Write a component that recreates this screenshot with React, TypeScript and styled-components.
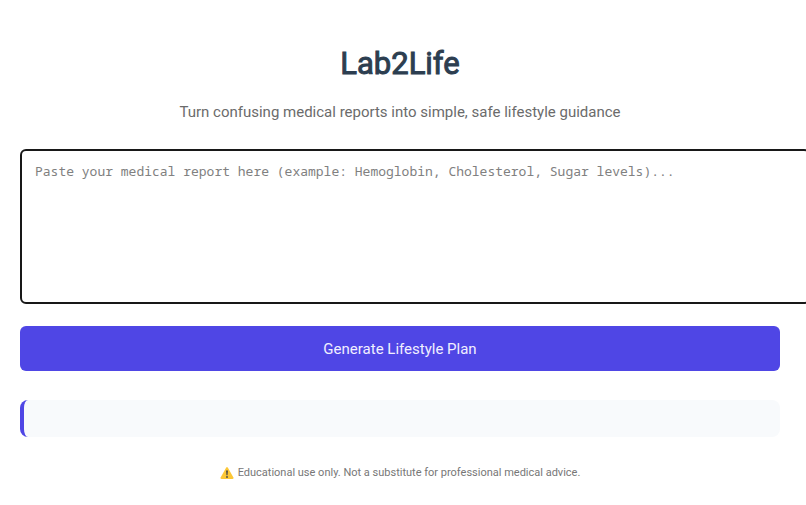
import React, { useState } from "react";
import styled, { createGlobalStyle } from "styled-components";

const GlobalStyle = createGlobalStyle`
  body {
    margin: 0;
    background: #ffffff;
    font-family: Roboto, "Liberation Sans", sans-serif;
    overflow-x: hidden;
  }
`;

const Page = styled.main`
  padding: 42px 26px 24px 20px;
  text-align: center;
`;

const Title = styled.h1`
  margin: 0;
  color: #2c3e50;
  font-size: 31px;
  line-height: 44px;
  font-weight: 400;
  -webkit-text-stroke: 1px #2c3e50;
`;

const Tagline = styled.p`
  margin: 16px 0 27px;
  color: #6b6b6b;
  font-size: 15px;
  line-height: 20px;
`;

const ReportField = styled.textarea`
  display: block;
  box-sizing: content-box;
  width: 100%;
  height: 127px;
  margin: 0;
  padding: 12px 13px;
  border: 2px solid #181818;
  border-radius: 6px;
  outline: none;
  resize: none;
  background: #ffffff;
  color: #222222;
  font-family: "Noto Sans Mono", "DejaVu Sans Mono", monospace;
  font-size: 13px;
  line-height: 16px;

  &::placeholder {
    color: #808080;
  }
`;

const GenerateButton = styled.button`
  display: block;
  width: 100%;
  height: 45px;
  margin: 22px 0 29px;
  padding: 0;
  border: 0;
  border-radius: 6px;
  background: #4f46e5;
  color: #f1efff;
  font-family: inherit;
  font-size: 15px;
  cursor: pointer;
`;

const Result = styled.section`
  min-height: 37px;
  border-left: 4px solid #4f46e5;
  border-radius: 8px;
  background: #f8fafc;
`;

const Disclaimer = styled.p`
  display: flex;
  justify-content: center;
  align-items: center;
  gap: 4px;
  margin: 28px 0 0;
  color: #777777;
  font-size: 11px;
  line-height: 16px;
`;

const WarningIcon = () => (
  <svg width="14" height="14" viewBox="0 0 28 28" aria-hidden="true">
    <path d="M12.2 3.4Q14 .8 15.8 3.4L26.8 23.2Q28 26 25 26H3Q0 26 1.2 23.2Z" fill="#fcc736" />
    <path d="M12.2 9.5Q14 7.8 15.8 9.5L15 18.5H13Z" fill="#454545" />
    <circle cx="14" cy="22" r="1.8" fill="#454545" />
  </svg>
);

export default function App() {
  const [report, setReport] = useState("");
  return (
    <>
      <GlobalStyle />
      <Page>
        <Title>Lab2Life</Title>
        <Tagline>Turn confusing medical reports into simple, safe lifestyle guidance</Tagline>
        <ReportField
          aria-label="Medical report"
          value={report}
          onChange={(event) => setReport(event.target.value)}
          placeholder="Paste your medical report here (example: Hemoglobin, Cholesterol, Sugar levels)..."
        />
        <GenerateButton type="button">Generate Lifestyle Plan</GenerateButton>
        <Result aria-live="polite" />
        <Disclaimer>
          <WarningIcon />
          Educational use only. Not a substitute for professional medical advice.
        </Disclaimer>
      </Page>
    </>
  );
}
